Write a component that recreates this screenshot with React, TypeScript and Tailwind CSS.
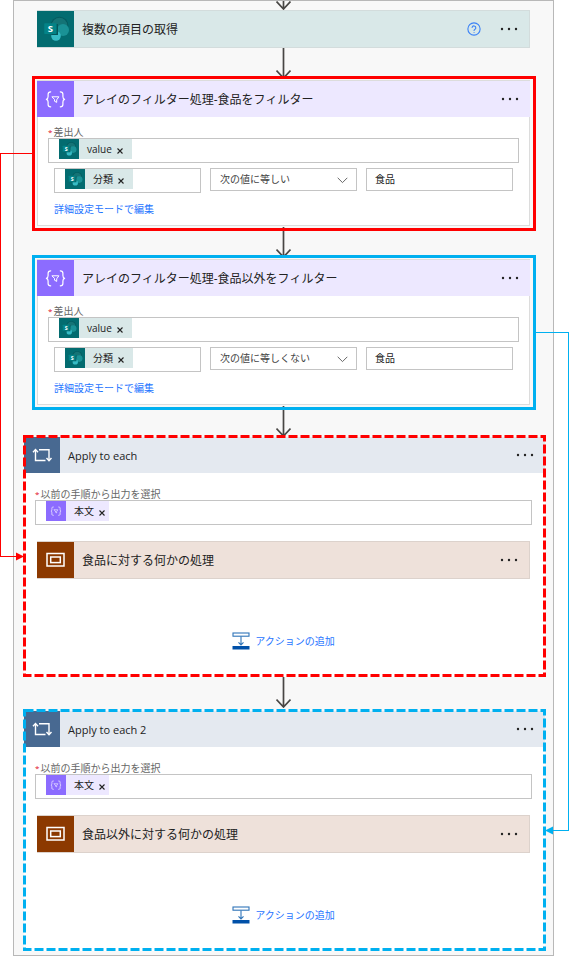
import React, { useId } from "react";

type Tone = "sharepoint" | "filter" | "loop" | "scope";

const iconBg: Record<Tone, string> = {
  sharepoint: "bg-[#036c70]",
  filter: "bg-[#8c6cff]",
  loop: "bg-[#486991]",
  scope: "bg-[#8c3900]",
};

const barBg: Record<Tone, string> = {
  sharepoint: "bg-[#d9e8e8]",
  filter: "bg-[#ede8ff]",
  loop: "bg-[#e4e9f0]",
  scope: "bg-[#eee1da]",
};

function Glyph({ tone }: { tone: Tone }) {
  return (
    <svg viewBox="0 0 36 36" className="block size-full" aria-hidden="true">
      {tone === "sharepoint" && (
        <>
          <circle cx="22" cy="14.5" r="8.8" fill="#055a5e" />
          <circle cx="22" cy="14.5" r="7.8" fill="#147476" />
          <circle cx="25.5" cy="19" r="6" fill="#1a9296" />
          <circle cx="18.5" cy="25" r="4.8" fill="#37bcc6" />
          <path d="M8 13h12.5v11H13.7v-1H8z" fill="#04575b" />
          <rect x="6.7" y="12.3" width="12.4" height="10.8" rx="0.8" fill="#038387" />
          <text x="12.8" y="21.2" textAnchor="middle" fontSize="9.5" fontWeight="700" fill="#fff" fontFamily="Open Sans, sans-serif">
            S
          </text>
        </>
      )}
      {tone === "filter" && (
        <g fill="none" stroke="#fff" strokeWidth="1.2" strokeLinecap="round" strokeLinejoin="round">
          <path d="M13.2 10.8c-2.2 0-2.6.8-2.6 2.4v2.4c0 1.5-.5 2.4-1.7 2.7 1.2.3 1.7 1.2 1.7 2.7v2.4c0 1.6.4 2.4 2.6 2.4" />
          <path d="M22.8 10.8c2.2 0 2.6.8 2.6 2.4v2.4c0 1.5.5 2.4 1.7 2.7-1.2.3-1.7 1.2-1.7 2.7v2.4c0 1.6-.4 2.4-2.6 2.4" />
          <path d="M14.8 15.8h6.600l-2.200 3v2.600l-2.200-1.200v-1.400z" strokeWidth="1" />
        </g>
      )}
      {tone === "loop" && (
        <g fill="none" stroke="#fff" strokeWidth="1.4">
          <path d="M11.5 13v10.5h10" />
          <path d="M15 12.7h10v10.5" />
          <path d="M9 15.2l2.5-2.7 2.5 2.7M22.5 21l2.5 2.7 2.5-2.7" />
        </g>
      )}
      {tone === "scope" && (
        <g fill="none" stroke="#fff" strokeWidth="1.5">
          <rect x="9.5" y="11.5" width="17" height="12.5" />
          <rect x="13.2" y="15" width="9.600" height="5.600" />
        </g>
      )}
    </svg>
  );
}

function MoreButton() {
  return (
    <button type="button" aria-label="メニュー" className="mr-[11px] shrink-0">
      <svg viewBox="0 0 18 4" className="block h-1 w-[18px]" fill="#222" aria-hidden="true">
        <circle cx="2" cy="2" r="1.2" />
        <circle cx="9" cy="2" r="1.2" />
        <circle cx="16" cy="2" r="1.2" />
      </svg>
    </button>
  );
}

function TitleBar({ tone, title, help = false }: { tone: Tone; title: string; help?: boolean }) {
  return (
    <div className={`flex h-9 items-center ${barBg[tone]}`}>
      <div className={`h-9 shrink-0 ${tone === "loop" ? "w-9" : "w-[37px]"} ${iconBg[tone]}`}>
        <Glyph tone={tone} />
      </div>
      <h2 className={`ml-2 grow pt-[2px] leading-4 text-[#222] ${tone === "loop" ? "text-[11px]" : "text-[12px]"}`}>{title}</h2>
      {help && (
        <button type="button" aria-label="ヘルプ" className="mr-[19px] shrink-0">
          <svg viewBox="0 0 24 24" className="block size-[14px]" fill="none" stroke="#3b82f6" strokeWidth="1.9" strokeLinecap="round" aria-hidden="true">
            <circle cx="12" cy="12" r="10.5" />
            <path d="M8.8 9.2a3.2 3.2 0 0 1 6.3 1c0 2.1-3 2.6-3 4.3M12.1 17.9v.1" />
          </svg>
        </button>
      )}
      <MoreButton />
    </div>
  );
}

function Arrow({ gap, pull }: { gap: string; pull?: string }) {
  return (
    <div className={`flex justify-center ${gap}`} aria-hidden="true">
      <svg viewBox="0 0 15 31" className={`h-[31px] w-[15px] shrink-0 ${pull ?? ""}`} fill="none" stroke="#484644" strokeWidth="1.7">
        <path d="M7.5 0v30M0.5 22.5l7 7.5 7-7.5" />
      </svg>
    </div>
  );
}

function TokenField({ id, tone, token, label }: { id?: string; tone: "sharepoint" | "filter"; token: string; label?: string }) {
  return (
    <div className="flex h-[25px] min-w-0 items-start border border-[#c4c4c4] bg-white pl-[10px]">
      <span className={`flex h-5 shrink-0 items-center ${barBg[tone]}`}>
        <span className={`size-5 ${iconBg[tone]}`}>
          <Glyph tone={tone} />
        </span>
        <span className="ml-2 text-[10px] leading-4 text-[#222]">{token}</span>
        <button type="button" aria-label={`${token} を削除`} className={`mt-1 ml-[5px] ${tone === "filter" ? "pr-1" : "pr-[9px]"}`}>
          <svg viewBox="0 0 6 6" className="block size-[6px]" stroke="#222" strokeWidth="1.1" aria-hidden="true">
            <path d="M0.5 0.5l5 5M5.5 0.5l-5 5" />
          </svg>
        </button>
      </span>
      <input id={id} aria-label={label} type="text" className="h-full w-0 min-w-0 grow text-[10px] outline-none" />
    </div>
  );
}

function FieldLabel({ htmlFor, children }: { htmlFor: string; children: React.ReactNode }) {
  return (
    <label htmlFor={htmlFor} className="flex gap-px text-[10px] leading-3 text-[#666]">
      <span className="text-[8px] text-[#e00b1c]">*</span>
      {children}
    </label>
  );
}

function FilterStep({ title, frame, operator }: { title: string; frame: string; operator: string }) {
  const id = useId();
  return (
    <section className={`relative mr-[17px] ml-[18px] border-3 pt-px pr-[3px] pb-[2px] pl-[2px] ${frame}`}>
      <div className="border-t border-[#dcdcdc]">
        <TitleBar tone="filter" title={title} />
      </div>
      <div className="border-x border-b border-[#dcdcdc] bg-white px-[10px] pt-[9px] pb-2">
        <FieldLabel htmlFor={id}>差出人</FieldLabel>
        <TokenField id={id} tone="sharepoint" token="value" />
        <div className="mx-[6px] mt-[5px] grid h-[25px] grid-cols-3 items-start gap-[9px]">
          <TokenField tone="sharepoint" token="分類" label="値" />
          <div className="grid h-[23px] items-center border border-[#c4c4c4] bg-white">
            <select
              aria-label="条件"
              defaultValue={operator}
              className="col-start-1 row-start-1 h-full w-full appearance-none bg-transparent pl-[9px] text-[10px] text-[#444] outline-none"
            >
              <option>{operator}</option>
            </select>
            <svg
              viewBox="0 0 11 7"
              className="pointer-events-none col-start-1 row-start-1 mt-[2px] mr-2 h-[7px] w-[11px] justify-self-end"
              fill="none"
              stroke="#666"
              strokeWidth="1"
              aria-hidden="true"
            >
              <path d="M0.7 0.8l4.8 4.8 4.8-4.8" />
            </svg>
          </div>
          <input
            aria-label="比較する値"
            type="text"
            defaultValue="食品"
            className="h-[23px] w-full min-w-0 border border-[#c4c4c4] bg-white pb-[3px] pl-2 text-[10px] text-[#222] outline-none"
          />
        </div>
        <a href="#advanced" className="mx-[6px] mt-2 block w-fit text-[10px] leading-4 text-[#1f75ff]">
          詳細設定モードで編集
        </a>
      </div>
    </section>
  );
}

function LoopStep({ title, inner, stroke }: { title: string; inner: string; stroke: string }) {
  const id = useId();
  return (
    <section className="relative mr-[7px] ml-[9px] px-px pt-[2px]">
      <TitleBar tone="loop" title={title} />
      <div className="bg-white pt-[15px] pb-7">
        <div className="mr-[13px] ml-[11px]">
          <FieldLabel htmlFor={id}>以前の手順から出力を選択</FieldLabel>
          <TokenField id={id} tone="filter" token="本文" />
        </div>
        <div className="mr-[15px] ml-[13px]">
          <div className="mt-4 border-y border-r border-[#dcd2cc]">
            <TitleBar tone="scope" title={inner} />
          </div>
          <button type="button" className="mx-auto mt-[54px] flex h-4 items-center gap-[5px] text-[10px] leading-4 text-[#1f75ff]">
            <svg viewBox="0 0 18 18" className="size-[18px]" fill="none" aria-hidden="true">
              <rect x="1" y="1" width="16" height="3.2" stroke="#2f74b8" strokeWidth="1.1" />
              <path d="M9 4.5v8M6.5 10.3l2.5 2.6 2.5-2.6" stroke="#2f74b8" strokeWidth="1.1" />
              <rect x="0.5" y="14" width="17" height="3.5" fill="#0050a8" />
            </svg>
            アクションの追加
          </button>
        </div>
      </div>
      <svg className="pointer-events-none absolute inset-0 size-full" fill="none" aria-hidden="true">
        <rect
          x="1.5"
          y="1.5"
          className="h-[calc(100%-3px)] w-[calc(100%-3px)]"
          stroke={stroke}
          strokeWidth="3"
          strokeDasharray="9 3"
        />
      </svg>
    </section>
  );
}

export default function App() {
  return (
    <main className="relative bg-white font-['Open_Sans','Noto_Sans_CJK_JP',sans-serif]">
      <div className="mr-[15px] ml-[13px] border border-[#b8b8b8] bg-[#f8f8f8] pb-1">
        <div className="flex h-[9px] items-end justify-center overflow-hidden" aria-hidden="true">
          <Arrow gap="" />
        </div>
        <section className="relative mr-[23px] ml-[23px] border-y border-r border-[#d3dcdc]">
          <TitleBar tone="sharepoint" title="複数の項目の取得" help />
        </section>
        <Arrow gap="h-7" />
        <FilterStep title="アレイのフィルター処理-食品をフィルター" frame="border-[#ff0000]" operator="次の値に等しい" />
        <Arrow gap="h-6" pull="-mt-1" />
        <FilterStep title="アレイのフィルター処理-食品以外をフィルター" frame="border-[#00b0f0]" operator="次の値に等しくない" />
        <Arrow gap="h-[25px]" pull="-mt-1" />
        <LoopStep title="Apply to each" inner="食品に対する何かの処理" stroke="#ff0000" />
        <Arrow gap="h-8" />
        <LoopStep title="Apply to each 2" inner="食品以外に対する何かの処理" stroke="#00b0f0" />
      </div>

      {/* Connector from the first filter to its loop */}
      <div className="pointer-events-none absolute top-[153px] left-0 h-[404px] w-8 border-t border-l border-[#ff0000]" />
      <div className="pointer-events-none absolute top-[552px] left-0 flex w-6 items-center">
        <span className="h-px grow bg-[#ff0000]" />
        <svg viewBox="0 0 8 9" className="h-[9px] w-2" fill="#ff0000" aria-hidden="true">
          <path d="M0 0.5l8 4-8 4z" />
        </svg>
      </div>

      {/* Connector from the second filter to its loop */}
      <div className="pointer-events-none absolute top-[332px] right-0 h-[498px] w-[33px] border-t border-r border-[#00b0f0]" />
      <div className="pointer-events-none absolute top-[826px] right-0 flex w-6 items-center">
        <svg viewBox="0 0 8 9" className="h-[9px] w-2" fill="#00b0f0" aria-hidden="true">
          <path d="M8 0.5l-8 4 8 4z" />
        </svg>
        <span className="h-px grow bg-[#00b0f0]" />
      </div>
    </main>
  );
}
